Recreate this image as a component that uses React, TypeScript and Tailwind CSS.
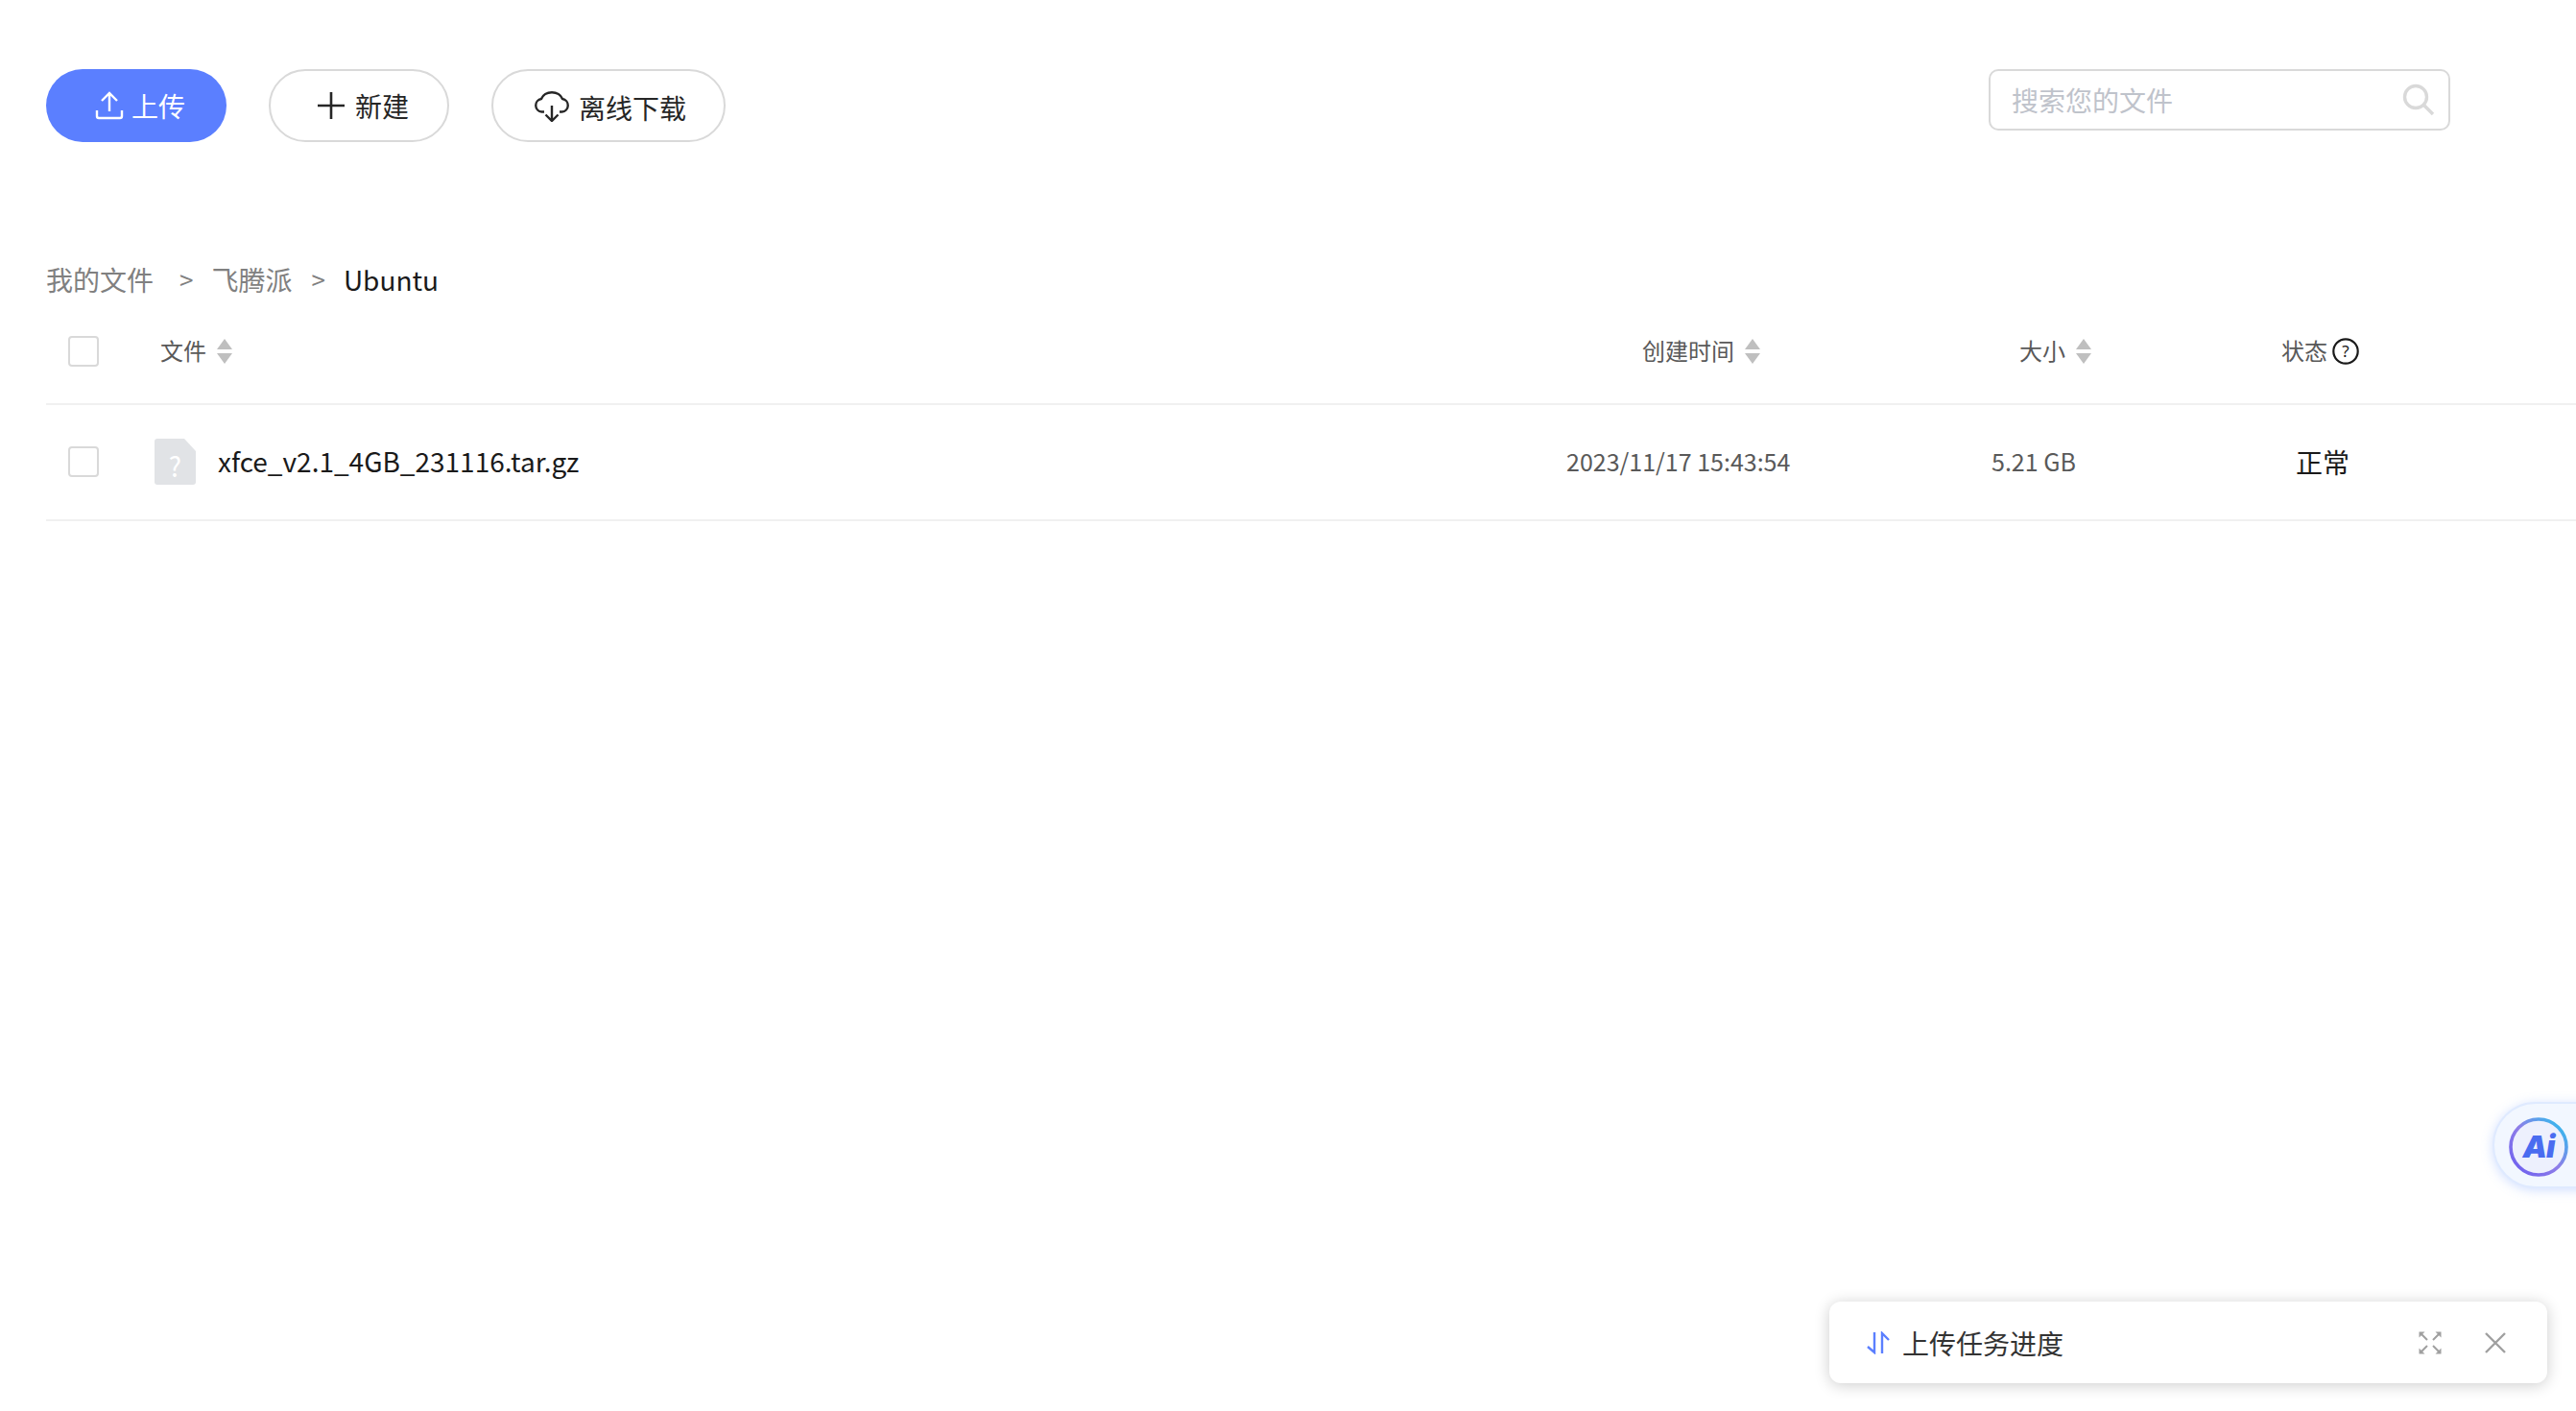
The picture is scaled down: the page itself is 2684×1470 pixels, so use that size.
const FONT = "font-['Noto_Sans_CJK_SC','Noto_Sans',sans-serif]";

function Sort() {
  return (
    <svg width="16" height="26" viewBox="0 0 16 26" className="ml-[11px] shrink-0">
      <path d="M8 0L16 11H0Z" fill="#bfbfbf" />
      <path d="M0 15H16L8 26Z" fill="#bfbfbf" />
    </svg>
  );
}

function Check() {
  return <div className="w-[32px] h-[32px] rounded-[4px] border-2 border-[#d9d9d9] bg-white" />;
}

const gridCols = "grid grid-cols-[113px_1471px_443px_302px_1fr] items-center";

export default function App() {
  return (
    <div className={`${FONT} relative w-full h-[1470px] overflow-hidden bg-white`}>
      <div className="flex items-start justify-between pt-[72px] pl-[48px] pr-[131px]">
        <div className="flex gap-[44px]">
          <button className="w-[188px] h-[76px] rounded-[38px] bg-[#5b7fff] text-white text-[28px] flex items-center pl-[51px]">
            <svg width="30" height="30" viewBox="0 0 30 30" fill="none" stroke="#fff" strokeWidth="2.4" className="mr-[8px]">
              <path d="M15 21V3M7 10l8-8 8 8" />
              <path d="M2 20v6a2 2 0 0 0 2 2h22a2 2 0 0 0 2-2v-6" />
            </svg>
            <span className="leading-none">上传</span>
          </button>
          <button className="w-[188px] h-[76px] rounded-[38px] border-2 border-[#d9d9d9] bg-white text-[#262626] text-[28px] flex items-center pl-[48px]">
            <svg width="30" height="30" viewBox="0 0 30 30" fill="none" stroke="#262626" strokeWidth="2.6" className="mr-[10px]">
              <path d="M15 1v28M1 15h28" />
            </svg>
            <span className="leading-none">新建</span>
          </button>
          <button className="w-[244px] h-[76px] rounded-[38px] border-2 border-[#d9d9d9] bg-white text-[#262626] text-[28px] flex items-center pl-[42px]">
            <svg width="38" height="32" viewBox="0 0 38 32" fill="none" stroke="#262626" strokeWidth="2.4" className="mr-[9px] mt-[2px]">
              <path d="M11 21.5H8.5a6.8 6.8 0 0 1-.5-13.5C9.5 3.8 14 1.2 19 1.2S28.500 3.800 30 8a6.800 6.800 0 0 1-.5 13.500H27" />
              <path d="M19 15v15.500M12.500 24.500l6.500 6.500 6.500-6.500" />
            </svg>
            <span className="leading-none mt-[4px]">离线下载</span>
          </button>
        </div>
        <div className="w-[481px] h-[64px] rounded-[10px] border-2 border-[#d9d9d9] flex items-center justify-between pl-[22px] pr-[14px]">
          <span className="text-[28px] leading-none text-[#bfc3cb]">搜索您的文件</span>
          <svg width="34" height="34" viewBox="0 0 34 34" fill="none" stroke="#d9d9d9" strokeWidth="3.4">
            <circle cx="14" cy="14" r="11.5" />
            <path d="M22.500 22.500L32 32" />
          </svg>
        </div>
      </div>

      <div className="mt-[124px] ml-[48px] h-[40px] flex items-center text-[28px] leading-[38px] pb-[2px]">
        <span className="text-[#808080]">我的文件</span>
        <span className="ml-[27px] text-[#808080] text-[26px]">&gt;</span>
        <span className="ml-[19px] text-[#808080]">飞腾派</span>
        <span className="ml-[20px] text-[#808080] text-[26px]">&gt;</span>
        <span className="ml-[19px] text-[#1a1a1a]">Ubuntu</span>
      </div>

      <div className="ml-[48px]">
        <div className={`${gridCols} h-[110px] border-b-2 border-[#f0f0f0] text-[24px] text-[#595959]`}>
          <div className="pl-[23px]"><Check /></div>
          <div className="pl-[6px] flex items-center"><span className="-mt-[2px]">文件</span><Sort /></div>
          <div className="pl-[79px] flex items-center"><span className="-mt-[2px]">创建时间</span><Sort /></div>
          <div className="pl-[29px] flex items-center"><span className="-mt-[2px]">大小</span><Sort /></div>
          <div className="flex items-center">
            <span className="-mt-[2px]">状态</span>
            <svg width="28" height="28" viewBox="0 0 28 28" className="ml-[5px]" fill="none">
              <circle cx="14" cy="14" r="12.700" stroke="#1a1a1a" strokeWidth="2.200" />
              <text x="14" y="20" textAnchor="middle" fontSize="17" fill="#1a1a1a" fontFamily="Noto Sans">?</text>
            </svg>
          </div>
        </div>
        <div className={`${gridCols} h-[121px] border-b-2 border-[#f0f0f0]`}>
          <div className="pl-[23px] -mt-[1px]"><Check /></div>
          <div className="flex items-center">
            <div className="relative w-[43px] h-[48px] shrink-0 -mt-[1px]">
              <svg width="43" height="48" viewBox="0 0 43 48">
                <path d="M3 0H31L43 13V45a3 3 0 0 1-3 3H3a3 3 0 0 1-3-3V3a3 3 0 0 1 3-3Z" fill="#e1e3e6" />
              </svg>
              <span className="absolute inset-x-0 top-[9px] text-center text-[28px] leading-[38px] text-white">?</span>
            </div>
            <span className="ml-[23px] -mt-[3px] text-[28px] text-[#1a1a1a] leading-none">xfce_v2.1_4GB_231116.tar.gz</span>
          </div>
          <div className="text-[25px] text-[#595959] -mt-[2px]">2023/11/17 15:43:54</div>
          <div className="text-[25px] text-[#595959] -mt-[2px]">5.21 GB</div>
          <div className="pl-[15px] text-[28px] text-[#1a1a1a] -mt-[2px]">正常</div>
        </div>
      </div>

      <div className="absolute left-[2597px] top-[1148px] w-[120px] h-[90px] rounded-l-[45px] bg-[#f2f7ff] border-2 border-[#dfeaff] shadow-[0_2px_12px_rgba(120,160,255,0.35)] flex items-center pl-[15px]">
        <div className="relative w-[62px] h-[62px] mt-[4px]">
          <svg width="62" height="62" viewBox="0 0 62 62" className="absolute inset-0">
            <defs>
              <linearGradient id="ring" x1="0" y1="1" x2="1" y2="0">
                <stop offset="0" stopColor="#6a5cf0" />
                <stop offset="0.5" stopColor="#8f7ee8" />
                <stop offset="1" stopColor="#22c4ee" />
              </linearGradient>
            </defs>
            <circle cx="31" cy="31" r="29" fill="#edf0fd" stroke="url(#ring)" strokeWidth="3.600" />
          </svg>
          <span className="absolute inset-0 flex items-center justify-center font-['Inter',sans-serif] font-black italic text-[32px] leading-none text-[#4a6cf0] tracking-[-1px]">Ai</span>
        </div>
      </div>

      <div className="absolute left-[1906px] top-[1356px] w-[748px] h-[85px] rounded-[12px] bg-white shadow-[0_2px_16px_rgba(0,0,0,0.2)] flex items-center pl-[39px] pr-[43px]">
        <svg width="24" height="24" viewBox="0 0 24 24" fill="none" stroke="#5b7fff" strokeWidth="2.400" className="shrink-0">
          <path d="M8 1v21L1 16" />
          <path d="M16 23V2l7 7" />
        </svg>
        <span className="ml-[13px] text-[28px] leading-none text-[#333333]">上传任务进度</span>
        <svg width="24" height="24" viewBox="0 0 24 24" fill="none" stroke="#a0a0a0" strokeWidth="2" className="ml-auto">
          <path d="M9 9L3 3M15 9l6-6M9 15l-6 6M15 15l6 6" />
          <path d="M0.500 0.500h6l-6 6ZM23.500 0.500h-6l6 6ZM0.500 23.500h6l-6-6ZM23.500 23.500h-6l6-6Z" fill="#a0a0a0" stroke="none" />
        </svg>
        <svg width="22" height="22" viewBox="0 0 22 22" fill="none" stroke="#a0a0a0" strokeWidth="2.400" className="ml-[45px]">
          <path d="M1 1l20 20M21 1L1 21" />
        </svg>
      </div>
    </div>
  );
}
